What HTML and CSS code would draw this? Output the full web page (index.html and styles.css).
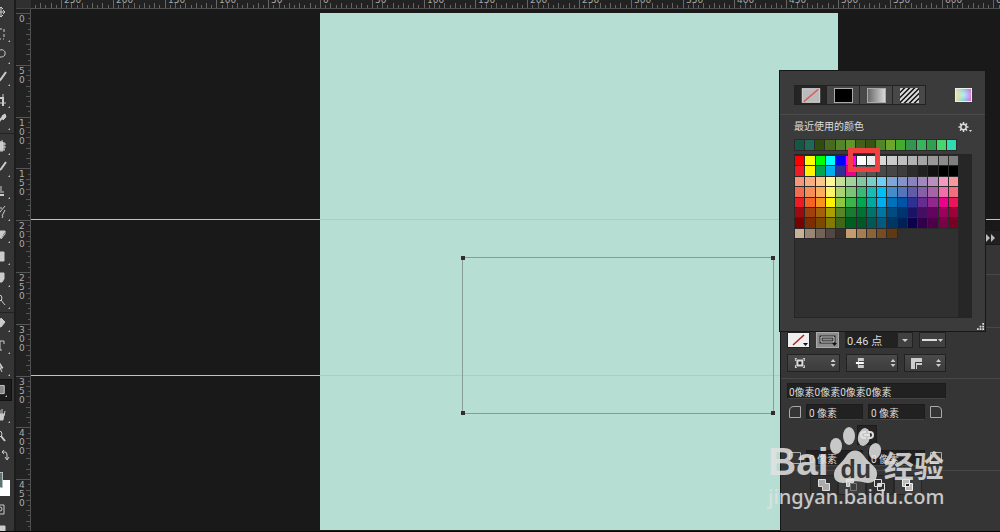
FILE: index.html
```html
<!DOCTYPE html>
<html lang="zh-CN">
<head>
<meta charset="utf-8">
<title>形状编辑</title>
<link rel="stylesheet" href="styles.css">
</head>
<body>
<div class="app">
  <nav class="toolbar" aria-label="工具">
    <button class="tool" aria-label="移动"><svg viewBox="0 0 14 22"><path d="M-4 11H5M1 7v9M3 9l2 2-2 2M-1 8l2-2 2 2M-1 14l2 2 2-2"/></svg></button>
    <button class="tool more" aria-label="选框"><svg viewBox="0 0 14 22"><path d="M0 6h2M4 6v3M4 11v3M0 16h1M3 16h1"/></svg></button>
    <button class="tool more" aria-label="套索"><svg viewBox="0 0 14 22"><path d="M-2 6C2 3 6 6 5 9c0 3-5 4-7 2"/></svg></button>
    <button class="tool more" aria-label="快速选择"><svg viewBox="0 0 14 22"><path class="thick" d="M6 5L1 12l-3 3"/></svg></button>
    <button class="tool more" aria-label="裁剪"><svg viewBox="0 0 14 22"><path class="thick" d="M-2 9h5v8"/><path d="M0 14h6M3 5v4"/></svg></button>
    <button class="tool more" aria-label="吸管"><svg viewBox="0 0 14 22"><path class="thick" d="M5 4L0 9l-3 5"/><path class="fill" d="M2 5l3-2 1 3-3 3z"/></svg></button>
    <hr>
    <button class="tool more" aria-label="修复"><svg viewBox="0 0 14 22"><path class="fill" d="M0 6h3v8H0z"/><path d="M0 5v11M2 4v12M4 6v8M-1 8h7M-1 11h7M-1 14h6"/></svg></button>
    <button class="tool more" aria-label="画笔"><svg viewBox="0 0 14 22"><path class="thick" d="M6 4L1 11l-3 2"/></svg></button>
    <button class="tool more" aria-label="图章"><svg viewBox="0 0 14 22"><path class="thick" d="M0 15h4"/><path d="M-1 12h5M1 6v5"/></svg></button>
    <button class="tool more" aria-label="历史画笔"><svg viewBox="0 0 14 22"><path d="M5 4L0 10l-2 3M5 8l-3 6M-1 6h3M3 14l-1 2"/></svg></button>
    <button class="tool more" aria-label="橡皮擦"><svg viewBox="0 0 14 22"><path class="fill" d="M0 7h5L1 14h-3z"/><path d="M5 7v3l-4 5"/></svg></button>
    <button class="tool more" aria-label="渐变"><svg viewBox="0 0 14 22"><path class="fill" d="M0 6h4v9H0z"/></svg></button>
    <button class="tool more" aria-label="模糊"><svg viewBox="0 0 14 22"><path class="fill" d="M-1 5h5v6l-2 3h-3z"/></svg></button>
    <button class="tool more" aria-label="减淡"><svg viewBox="0 0 14 22"><circle cx="-1" cy="8" r="3"/><path d="M1 10l4 5"/></svg></button>
    <hr class="thin">
    <button class="tool more" aria-label="钢笔"><svg viewBox="0 0 14 22"><path class="fill" d="M1 5l4 4-4 5-3-1z"/></svg></button>
    <button class="tool more" aria-label="文字"><svg viewBox="0 0 14 22"><path d="M-1 6h5v3M0 6v9h2"/></svg></button>
    <button class="tool more" aria-label="路径选择"><svg viewBox="0 0 14 22"><path class="fill" d="M-1 5l4 6H0l2 4"/></svg></button>
    <button class="tool more active" aria-label="矩形"><svg viewBox="0 0 14 22"><path class="gray" d="M-2 6h6v9h-6z"/></svg></button>
    <button class="tool more hand" aria-label="抓手"><svg viewBox="0 0 14 22"><path class="fill" d="M-1 10h5l-1 6h-4z"/><path d="M0 12V6M2 12V5M4 12l1-5"/></svg></button>
    <button class="tool" aria-label="缩放"><svg viewBox="0 0 14 22"><circle cx="-1" cy="8" r="3"/><path class="thick" d="M1 10l4 5"/></svg></button>
    <button class="tool short" aria-label="切换颜色"><svg viewBox="0 0 14 16"><path d="M2 4h3q2 0 2 3v4M4 2L2 4l2 2M5 9l2 3 2-3"/></svg></button>
    <div class="colors"><span class="front"></span></div>
    <button class="tool" aria-label="快速蒙版"><svg viewBox="0 0 14 22"><path d="M-2 7h6v9h-6"/><circle cx="0" cy="11" r="2"/></svg></button>
    <button class="tool" aria-label="屏幕模式"><svg viewBox="0 0 14 22"><path class="fill" d="M-1 6h6v6h-6z"/><path d="M0 15h4"/></svg></button>
  </nav>
  <main class="document">
    <div class="corner"></div>
    <svg class="ruler-top" id="rulerTop" aria-hidden="true"></svg>
    <svg class="ruler-left" id="rulerLeft" aria-hidden="true"></svg>
    <section class="stage">
      <div class="artboard"></div>
      <div class="guide first"></div>
      <div class="guide second"></div>
      <div class="selection"><i></i><i></i><i></i><i></i></div>
    </section>
  </main>

  <aside class="properties">
    <header><svg width="10" height="8" viewBox="0 0 10 8"><path d="M0 0l4 4-4 4zM5 0l4 4-4 4z" fill="#bbb"/></svg></header>
    <div class="band"></div>
    <div class="band size"></div>
    <section class="block stroke">
      <div class="row">
        <button class="chip none" aria-label="填充"><svg viewBox="0 0 21 14"><path d="M5 12L16 2" stroke="#a22" stroke-width="1.500"/><path d="M15 10h5l-2.500 3z" fill="#111"/></svg></button>
        <button class="chip outline" aria-label="描边"><svg viewBox="0 0 21 14"><path d="M4 4h13v5H4z" fill="none" stroke="#222" stroke-width="3"/><path d="M4 4h13v5H4z" fill="none" stroke="#ddd"/><path d="M15 10h5l-2.500 3z" fill="#111"/></svg></button>
        <div class="combo"><input aria-label="描边宽度" value="0.46 点"><button aria-label="宽度选项"><svg viewBox="0 0 14 14"><path d="M4 6h6l-3 3z" fill="#ccc"/></svg></button></div>
        <button class="line" aria-label="描边类型"><svg viewBox="0 0 25 14"><path d="M2 7h15" stroke="#ddd" stroke-width="2"/><path d="M18 6h5l-2.500 3z" fill="#ccc"/></svg></button>
      </div>
      <div class="row">
        <button class="menu" aria-label="对齐"><svg viewBox="0 0 51 16"><path d="M7 3.500h2M15 3.500h2M7 12.500h2M15 12.500h2M7.500 3v3M16.500 3v3M7.500 13v-3M16.500 13v-3" stroke="#ccc"/><rect x="9.500" y="5.500" width="5" height="5" fill="#222" stroke="#ddd" stroke-width="2"/><path d="M43 7l2.500-3L48 7zM43 9l2.500 3 2.500-3z" fill="#ccc"/></svg></button>
        <button class="menu" aria-label="端点"><svg viewBox="0 0 51 16"><path d="M11 3h6v3h-5v4h5v3h-6z" fill="#ccc"/><path d="M9 8h8" stroke="#fff" stroke-width="2"/><path d="M44 7l2.500-3L49 7zM44 9l2.500 3 2.500-3z" fill="#ccc"/></svg></button>
        <button class="menu small" aria-label="角点"><svg viewBox="0 0 40 16"><path d="M6 3h11v7h-5v4H6z" fill="#ccc"/><path d="M10.500 14V7.500H17" fill="none" stroke="#333"/><path d="M31 7l2.500-3L36 7zM31 9l2.500 3 2.500-3z" fill="#ccc"/></svg></button>
      </div>
    </section>
    <section class="block radii">
      <input class="wide" aria-label="圆角半径" value="0像素0像素0像素0像素">
      <div class="corners"><svg viewBox="0 0 12 12"><path d="M.5 11.500V5q0-4.500 4.500-4.500h6.500v11z"/></svg><input aria-label="左上" value="0 像素"><input aria-label="右上" value="0 像素"><svg viewBox="0 0 12 12"><path d="M.5 11.500V.5H7q4.500 0 4.500 4.500v6.500z"/></svg></div>
      <button class="link" aria-label="链接半径"><svg viewBox="0 0 18 18"><path d="M8 6H6q-3 0-3 3t3 3h2M10 6h2q3 0 3 3t-3 3h-2M6 9h6"/></svg></button>
      <div class="corners"><svg viewBox="0 0 12 12"><path d="M.5.5V7q0 4.500 4.500 4.500h6.500V.5z"/></svg><input aria-label="左下" value="0 像素"><input aria-label="右下" value="0 像素"><svg viewBox="0 0 12 12"><path d="M.5.5v11H7q4.500 0 4.500-4.500V.5z"/></svg></div>
    </section>
    <section class="paths">
      <button aria-label="合并形状"><svg viewBox="0 0 26 18"><path d="M7.500 3.500h7v4h4v7h-7v-4h-4z" fill="#aaa" stroke="#ddd"/></svg></button>
      <button class="lit" aria-label="减去顶层"><svg viewBox="0 0 26 18"><path d="M7.500 3.500h7v3h-4v4h-3z" fill="#bbb" stroke="#ddd"/><path d="M11.500 7.500h6v7h-6z" fill="none" stroke="#777"/></svg></button>
      <button aria-label="交叉形状"><svg viewBox="0 0 26 18"><path d="M7.500 3.500h7v7h-7zM10.500 7.500h7v7h-7z" fill="none" stroke="#ddd"/><path d="M11 8h3v2h-3z" fill="#ddd"/></svg></button>
      <button class="lit" aria-label="排除重叠"><svg viewBox="0 0 26 18"><path d="M7.500 3.500h7v7h-7zM10.500 7.500h7v7h-7z" fill="#bbb" stroke="#eee"/><path d="M11 8h3v2h-3z" fill="#222"/></svg></button>
    </section>
  </aside>

  <aside class="picker">
    <div class="types">
      <div class="tabs">
        <button class="on" aria-label="无颜色"><svg viewBox="0 0 32 18"><rect x="7.500" y="2.500" width="18" height="14" fill="#bbb" stroke="#ddd"/><path d="M9 16L24 3" stroke="#e05555" stroke-width="1.500"/></svg></button>
        <button aria-label="纯色"><svg viewBox="0 0 32 18"><rect x="7.500" y="2.500" width="18" height="14" fill="#000" stroke="#aaa"/></svg></button>
        <button aria-label="渐变"><svg viewBox="0 0 32 18"><defs><linearGradient id="fade"><stop stop-color="#666"/><stop offset="1" stop-color="#ddd"/></linearGradient></defs><rect x="7.500" y="2.500" width="18" height="14" fill="url(#fade)" stroke="#aaa"/></svg></button>
        <button aria-label="图案"><svg viewBox="0 0 32 18"><defs><clipPath id="tile"><path d="M7 2h19v15H7z"/></clipPath></defs><path d="M7 2h19v15H7z" fill="#111"/><path clip-path="url(#tile)" d="M5 6l6-6M5 11L16 0M5 16L21 0M8 18L26 0M13 18L29 2M18 18L30 6M23 18l6-6" stroke="#ddd" stroke-width="2"/></svg></button>
      </div>
      <button class="spectrum" aria-label="拾色器"></button>
    </div>
    <div class="heading"><h2>最近使用的颜色</h2><button aria-label="设置"><svg viewBox="0 0 14 12"><circle cx="5.500" cy="6" r="2.700" fill="none" stroke="#ddd" stroke-width="1.500"/><path d="M5.500 1v2M5.500 9v2M.5 6h2M8.500 6h2M2 2.500l1.400 1.400M9 2.500L7.600 3.900M2 9.500l1.400-1.400M9 9.500L7.600 8.100" stroke="#ddd" stroke-width="1.500"/><path d="M11 9h3l-1.500 2z" fill="#ddd"/></svg></button></div>
    <div class="swatches recent" id="recent"></div>
    <div class="library"><div class="swatches" id="swatches"></div><div class="highlight"></div></div>
    <svg class="grip" viewBox="0 0 8 8"><path d="M6 0h2v2H6zM3 3h2v2H3zM6 3h2v2H6zM0 6h2v2H0zM3 6h2v2H3zM6 6h2v2H6z" fill="#ddd"/></svg>
  </aside>

  <div class="watermark">
    <div class="brand"><span>Bai</span><div class="paw"><svg viewBox="0 0 54 57"><g fill="#e2e2e2"><ellipse cx="7" cy="19" rx="6" ry="8"/><ellipse cx="20" cy="9" rx="6" ry="9"/><ellipse cx="35" cy="10" rx="6" ry="9" transform="rotate(12 35 10)"/><ellipse cx="46" cy="24" rx="6" ry="8" transform="rotate(12 46 24)"/><path d="M18 28c5-6 12-6 17 1 5 8 14 10 13 19-1 8-8 9-14 7-5-1-9-1-14 0-7 2-14 1-15-6-1-9 8-12 13-21z"/></g></svg><b>du</b></div><span class="cn">经验</span></div>
    <div class="site">jingyan.baidu.com</div>
  </div>
</div>
<script src="app.js"></script>
</body>
</html>
```
FILE: styles.css
```css
* { box-sizing: border-box; }
body { margin: 0; background: #191919; font-family: "Liberation Sans", "Noto Sans CJK SC", sans-serif; font-size: 10px; color: #ddd; }
button, input { font: inherit; color: inherit; margin: 0; padding: 0; border: 0; border-radius: 0; background: none; }
button { display: block; }
svg { display: block; }
.app { position: relative; display: flex; height: 100vh; min-height: 532px; overflow: hidden; border-bottom: 1px solid #080808; }

.toolbar { flex: none; width: 16px; padding-top: 1px; background: #353535; border-right: 2px solid #1c1c1c; overflow: hidden; }
.toolbar hr { height: 3px; margin: 0; border: 0; border-top: 1px solid #222; }
.toolbar hr.thin { height: 1px; }
.tool { position: relative; width: 14px; height: 22px; }
.tool svg { width: 14px; height: 100%; fill: none; stroke: #ccc; stroke-width: 1; }
.tool .thick { stroke-width: 2; }
.tool .fill { fill: #ccc; }
.tool .gray { fill: #888; }
.tool.more::after { content: ""; position: absolute; right: 4px; bottom: 3px; border: 1px solid; border-color: transparent #bbb #bbb transparent; }
.tool.active { background: #1b1b1b; border: 1px solid #111; border-left: 0; width: 12px; }
.tool.hand { margin-top: 3px; }
.tool.short { height: 16px; }
.colors { height: 42px; padding-top: 16px; margin-top: -8px; background: linear-gradient(#fff, #fff) 0 24px / 10px 16px no-repeat; }
.colors .front { display: block; width: 3px; height: 16px; background: #577; border: solid #bbb; border-width: 1px 1px 1px 0; }

.document { flex: 1; display: grid; grid-template-columns: 15px 1fr; grid-template-rows: 9px 1fr; min-width: 0; }
.corner { background: #303030; border-bottom: 1px solid #444; }
.ruler-top, .ruler-left { width: 100%; height: 100%; min-height: 0; background: #222; overflow: hidden; }
.ruler-top { border-bottom: 1px solid #505050; }
.ruler-left { border-right: 1px solid #505050; }
.ruler-top text, .ruler-left text { fill: #aaa; font-family: "DejaVu Sans", sans-serif; font-size: 9px; }
.stage { position: relative; overflow: hidden; background: #191919; }
.artboard { position: absolute; left: 289px; top: 4px; width: 518px; bottom: 1px; background: #b7ded3; }
.guide { position: absolute; left: 0; right: 0; height: 1px; background: #6ae8e4; }
.guide.first { top: 210px; }
.guide.second { top: 366px; }
.selection { position: absolute; left: 431px; top: 248px; width: 312px; height: 157px; border: 1px solid #869c96; }
.selection i { position: absolute; width: 4px; height: 4px; background: #332b2e; }
.selection i:nth-child(odd) { left: -2px; }
.selection i:nth-child(even) { right: -2px; }
.selection i:nth-child(-n+2) { top: -2px; }
.selection i:nth-child(n+3) { bottom: -2px; }

.properties { position: absolute; top: 231px; right: 0; bottom: 0; width: 220px; background: #353535; border-left: 1px solid #181818; }
.properties header { display: flex; justify-content: flex-end; align-items: center; height: 14px; padding-right: 4px; background: #202020; border-bottom: 1px solid #181818; }
.band { height: 30px; border-bottom: 1px solid #484848; }
.band.size { height: 53px; }
.block { padding: 4px 54px 6px 6px; border-bottom: 1px solid #484848; }
.row { display: flex; gap: 6px; height: 16px; }
.row + .row { height: 18px; margin-top: 6px; }
.stroke .row svg { width: 100%; height: 100%; }
.chip { width: 23px; flex: none; background: #eee; border: 1px solid #222; }
.chip.outline { background: #8c8c8c; border-color: #aaa; }
.combo { display: flex; flex: 1; min-width: 0; }
.combo input { flex: 1; width: 0; min-width: 0; background: #222; padding-left: 2px; font-size: 11px; font-family: Roboto, "Noto Sans CJK SC", sans-serif; }
.combo button { flex: none; width: 16px; background: #404040; border: 1px solid #222; }
.line { flex: none; width: 27px; background: #404040; border: 1px solid #222; }
.menu { flex: 53; background: linear-gradient(#4a4a4a, #3c3c3c); border: 1px solid #222; }
.menu.small { flex: 42; }
.radii { height: 92px; }
.radii input { background: #212121; border: 1px solid #1c1c1c; border-bottom-color: #444; height: 16px; font-family: Roboto, "Noto Sans CJK SC", sans-serif; }
.wide { display: block; width: 100%; padding-left: 1px; }
.corners { display: grid; grid-template-columns: 12px 57px 57px 12px; gap: 5px; align-items: center; margin: 5px 2px 0; }
.corners input { min-width: 0; width: 100%; padding-left: 2px; }
.corners svg { width: 12px; height: 12px; fill: none; stroke: #aaa; }
.link { width: 20px; height: 20px; margin: 5px auto 0; background: #242424; border: 1px solid #1c1c1c; }
.link svg { fill: none; stroke: #ddd; stroke-width: 2; }
.paths { display: flex; padding: 4px 0 0 29px; }
.paths button { width: 28px; height: 20px; background: #303030; border: 1px solid #262626; }
.paths .lit { background: #3e3e3e; }

.picker { position: absolute; top: 70px; right: 14px; width: 207px; height: 262px; background: #3b3b3b; border: 1px solid #171717; }
.types { display: flex; align-items: center; justify-content: space-between; height: 44px; padding: 5px 13px 0 14px; border-bottom: 1px solid #4b4b4b; }
.tabs { display: flex; }
.tabs button { width: 33px; height: 20px; background: #484848; border: 1px solid #222; border-left-width: 0; }
.tabs .on { background: #252525; border-left-width: 1px; }
.tabs svg { width: 100%; height: 100%; }
.spectrum { width: 17px; height: 14px; border: 1px solid #eee; background: radial-gradient(#fff9, transparent), linear-gradient(90deg, #eed6a0, #88d8b0, #70a8ed, #e060cc); }
.heading { display: flex; align-items: center; justify-content: space-between; height: 24px; padding: 0 13px 0 14px; }
.heading h2 { margin: 0; font-size: 10px; font-weight: 400; line-height: 14px; }
.heading svg { width: 14px; height: 12px; }
.swatches { display: grid; grid-template-columns: repeat(16, 1fr); grid-auto-rows: 1fr; gap: 1px; width: 163px; }
.recent { height: 12px; margin: 0 0 3px 14px; border: 1px solid #2a2a2a; background: #2a2a2a; }
.library { position: relative; height: 164px; margin: 0 13px 0 14px; padding-top: 1px; border: 1px solid #252525; background: linear-gradient(#262626, #262626) right / 13px 100% no-repeat #303030; }
.library .swatches { height: 82px; }
.swatches button { min-width: 0; min-height: 0; outline: 1px solid #2a2a2a; }
.highlight { position: absolute; left: 53px; top: -7px; width: 32px; height: 24px; border: 5px solid #f04040; }
.grip { position: absolute; right: 1px; bottom: 1px; width: 7px; height: 7px; }

.watermark { position: absolute; left: 768px; top: 426px; width: 178px; color: #e2e2e2; opacity: .85; pointer-events: none; }
.brand { display: flex; height: 58px; align-items: flex-end; font-weight: 700; font-size: 39px; line-height: 44px; }
.paw { position: relative; flex: none; width: 54px; height: 57px; margin-right: 1px; }
.paw svg { width: 54px; height: 57px; }
.paw b { position: absolute; left: 0; right: 0; bottom: 0; text-align: center; color: #383838; font-size: 25px; line-height: 30px; }
.brand .cn { font-family: "Noto Sans CJK SC", sans-serif; font-size: 30px; line-height: 40px; }
.site { font-family: "Noto Sans", sans-serif; font-size: 20px; font-weight: 500; line-height: 26px; }
```
FILE: app.js
```js
const recentColors = '175546 206956 304d0b 486b1d 55842a 61962c 43601a 385414 53862a 6ca52a 43ac2d 329650 39b45b 30a04d 47d66b 30dbad';
const libraryColors = [
  'ff0000 ffff00 00ff00 00ffff 0000ff ff00ff ffffff ebebeb d7d7d7 cacaca bebebe b1b1b1 a4a4a4 979797 8b8b8b 7f7f7f',
  'ed1c24 fff200 00a651 00aeef 2e3192 ec008c 626262 555555 494949 464646 3d3d3d 2c2c2c 202020 111111 000000 000000',
  'f7977a f9ad81 fdc68a fff79a c4df9b a2d39c 82ca9d 7bcdc8 6ecff6 7ea7d8 8493ca 8882be a187be bc8dbf f49ac2 f6989d',
  'f26c4f f68e55 fbaf5c fff467 acd372 7cc576 3bb878 1abbb4 00bff3 438cca 5574b9 605ca8 855fa8 a763a8 f06ea9 f26d7d',
  'ed1c24 f26522 f7941d fff200 8dc73f 39b54a 00a651 00a99d 00aeef 0072bc 0054a6 2e3192 662d91 92278f ec008c ed145b',
  '9e0b0f a0410d a36209 aba000 598527 1a7b30 007236 00746b 0076a3 004b80 003471 1b1464 440e62 630460 9e005d 9e0039',
  '790000 7b2e00 7d4900 827b00 406618 005e20 005826 005952 005b7f 003663 002157 0d004c 32004b 4b0049 7b0046 7a0026',
  'c7b299 998675 736357 534741 37302d c69c6e a67c52 8c6239 754c24 603913'
].join(' ');

function addSwatches(id, colors) {
  const box = document.getElementById(id);
  for (const color of colors.split(' ')) {
    const button = document.createElement('button');
    button.style.background = '#' + color;
    button.setAttribute('aria-label', '#' + color);
    box.append(button);
  }
}
addSwatches('recent', recentColors);
addSwatches('swatches', libraryColors);

const step = 51.8;
const originX = 289;
let topMarks = '';
for (let i = -56; i <= 140; i++) {
  const x = Math.round(originX + i * step / 10);
  const major = i % 10 === 0;
  topMarks += `<path d="M${x + 0.5} ${major ? 0 : i % 2 ? 5 : 3}V8" stroke="#666"/>`;
  if (major) topMarks += `<text x="${x + 3}" y="3">${Math.abs(i * 5)}</text>`;
}
document.getElementById('rulerTop').innerHTML = topMarks;

let leftMarks = '';
for (let i = 0; i <= 102; i++) {
  const y = Math.round(4 + i * step / 10);
  const major = i % 10 === 0;
  leftMarks += `<path d="M${major ? 0 : i % 2 ? 12 : 10} ${y + 0.5}H15" stroke="#555"/>`;
  if (major) String(i * 5).split('').forEach((digit, n) => {
    leftMarks += `<text x="3" y="${y + 9 + n * 9}">${digit}</text>`;
  });
}
document.getElementById('rulerLeft').innerHTML = leftMarks;
```
